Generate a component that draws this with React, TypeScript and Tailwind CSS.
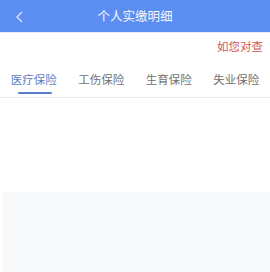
import React from "react";

export default function App() {
  const tabs = ["医疗保险", "工伤保险", "生育保险", "失业保险"];
  return (
    <div
      className="w-[270px] h-[272px] overflow-hidden bg-white flex flex-col"
      style={{ fontFamily: '"Noto Sans CJK SC", "Noto Sans", sans-serif' }}
    >
      <div className="h-[32px] bg-[#5b8ef0] relative flex items-center justify-center shrink-0">
        <svg
          className="absolute left-[15px] top-[11px]"
          width="9"
          height="12"
          viewBox="0 0 9 12"
          fill="none"
        >
          <path d="M7 1 L2 6 L7 11" stroke="#dfe9ff" strokeWidth="1.3" />
        </svg>
        <span className="text-[#f4f7ff] text-[12.5px] leading-none">个人实缴明细</span>
      </div>
      <div className="h-[1px] bg-[#e6eefc] shrink-0" />
      <div className="h-[27px] flex items-center justify-end pr-[7px] overflow-hidden shrink-0">
        <span className="text-[#d25555] text-[11.5px] leading-none whitespace-nowrap">
          如您对查
        </span>
      </div>
      <div className="h-[38px] grid grid-cols-4 border-b border-[#e8e8ea] shrink-0">
        {tabs.map((t, i) => (
          <div key={t} className="relative flex items-center justify-center">
            <span
              className={
                "text-[11.5px] leading-none mt-[2px] " +
                (i === 0 ? "text-[#5a7ec6]" : "text-[#707070]")
              }
            >
              {t}
            </span>
            {i === 0 && (
              <div className="absolute bottom-[3px] left-[18px] w-[34px] h-[2px] bg-[#5a7ec6] rounded-full" />
            )}
          </div>
        ))}
      </div>
      <div className="h-[94px] bg-white shrink-0" />
      <div className="flex-1 bg-[#f7f8fa] ml-[2px]" />
    </div>
  );
}
